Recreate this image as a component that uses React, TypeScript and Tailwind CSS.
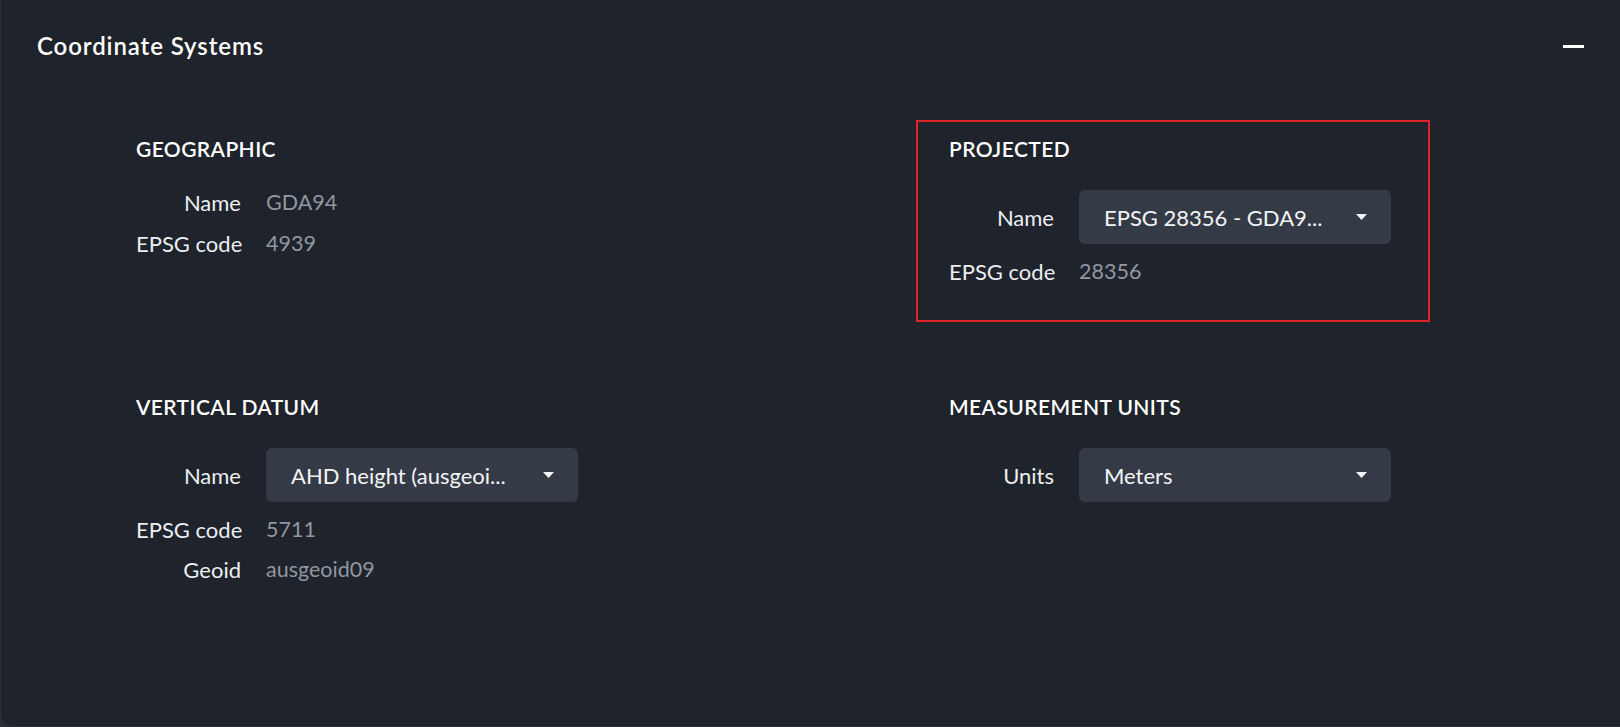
import React from 'react';

interface Row {
  label: string;
  value: string;
}

function Caret() {
  return (
    <svg width="11" height="6" viewBox="0 0 11 6" className="shrink-0">
      <path d="M0 0h11L5.5 6z" fill="#f3f4f6" />
    </svg>
  );
}

function Select({ value }: { value: string }) {
  return (
    <div className="flex h-[54px] w-[312px] items-center justify-between rounded-md bg-[#353b46] pl-[25px] pr-[24px] text-[22px] text-[#f3f4f6]">
      <span className="truncate">{value}</span>
      <Caret />
    </div>
  );
}

function Label({ children }: { children: React.ReactNode }) {
  return <div className="w-[105px] shrink-0 whitespace-nowrap text-right text-[22px] text-[#eceef1]">{children}</div>;
}

function TextRow({ row }: { row: Row }) {
  return (
    <div className="flex h-[40px] items-center">
      <Label>{row.label}</Label>
      <div className="ml-[25px] text-[21.5px] text-[#9197a0]">{row.value}</div>
    </div>
  );
}

function Section({
  title,
  select,
  rows,
  highlighted,
  className = '',
}: {
  title: string;
  select?: { label: string; value: string };
  rows: Row[];
  highlighted?: boolean;
  className?: string;
}) {
  return (
    <div
      className={`border-2 pl-[31px] pt-[15px] ${highlighted ? 'border-[#e0232b]' : 'border-transparent'} ${className}`}
    >
      <h3 className="text-[21px] font-semibold uppercase leading-6 tracking-[0.4px] text-white">{title}</h3>
      {select ? (
        <>
          <div className="mt-[29px] flex items-center">
            <Label>{select.label}</Label>
            <div className="ml-[25px]">
              <Select value={select.value} />
            </div>
          </div>
          <div className="mt-[7px] flex flex-col">
            {rows.map((r) => (
              <TextRow key={r.label} row={r} />
            ))}
          </div>
        </>
      ) : (
        <div className="mt-[21px] flex flex-col gap-[1px]">
          {rows.map((r) => (
            <TextRow key={r.label} row={r} />
          ))}
        </div>
      )}
    </div>
  );
}

export default function App() {
  return (
    <div className="min-h-screen bg-[#2a303a] pl-[1px] font-['Lato',sans-serif]">
      <div className="h-[726px] rounded-bl-[10px] bg-[#1f232b] px-[36px]">
        {/* Header */}
        <div className="flex h-[92px] items-center justify-between">
          <h2 className="text-[24px] font-semibold tracking-[0.9px] text-white">Coordinate Systems</h2>
          <span className="block h-[3px] w-[21px] bg-white" />
        </div>

        {/* Sections */}
        <div className="mt-[28px] grid grid-cols-[813px_514px] grid-rows-[202px_auto] gap-y-[56px] pl-[66px]">
          <Section
            title="Geographic"
            rows={[
              { label: 'Name', value: 'GDA94' },
              { label: 'EPSG code', value: '4939' },
            ]}
            className="w-[514px]"
          />
          <Section
            title="Projected"
            highlighted
            select={{ label: 'Name', value: 'EPSG 28356 - GDA9...' }}
            rows={[{ label: 'EPSG code', value: '28356' }]}
          />
          <Section
            title="Vertical Datum"
            select={{ label: 'Name', value: 'AHD height (ausgeoi...' }}
            rows={[
              { label: 'EPSG code', value: '5711' },
              { label: 'Geoid', value: 'ausgeoid09' },
            ]}
            className="w-[514px]"
          />
          <Section title="Measurement Units" select={{ label: 'Units', value: 'Meters' }} rows={[]} />
        </div>
      </div>
    </div>
  );
}
